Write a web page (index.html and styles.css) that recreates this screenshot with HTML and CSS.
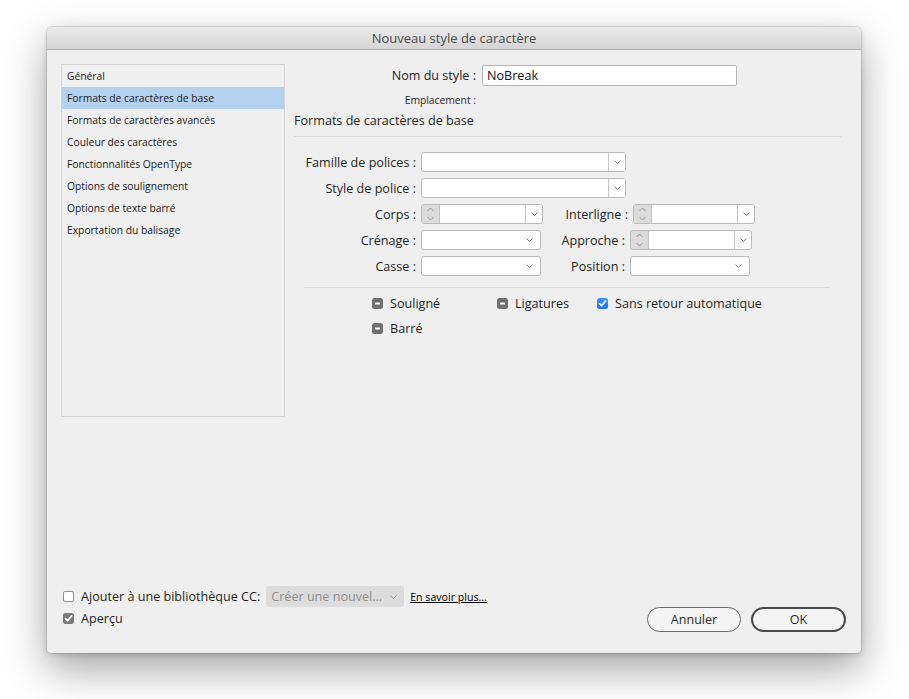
FILE: index.html
```html
<!DOCTYPE html>
<html lang="fr">
<head>
<meta charset="utf-8">
<title>Nouveau style de caractère</title>
<link rel="stylesheet" href="styles.css">
</head>
<body>
<div class="window">
  <div class="titlebar">Nouveau style de caractère</div>
  <div class="content">
    <div class="main">
      <ul class="sidebar">
        <li>Général</li>
        <li class="selected">Formats de caractères de base</li>
        <li>Formats de caractères avancés</li>
        <li>Couleur des caractères</li>
        <li>Fonctionnalités OpenType</li>
        <li>Options de soulignement</li>
        <li>Options de texte barré</li>
        <li>Exportation du balisage</li>
      </ul>
      <div class="panel">
        <div class="name-row">
          <span class="name-label">Nom du style :</span>
          <div class="textfield">NoBreak</div>
        </div>
        <div class="loc-row"><span class="loc-label">Emplacement :</span></div>
        <div class="section-title">Formats de caractères de base</div>
        <div class="rule"></div>
        <div class="form-grid">
          <span class="lbl">Famille de polices :</span>
          <div class="select segmented wide">
            <div class="field"></div>
            <div class="drop"><svg width="7" height="4" viewBox="0 0 7 4"><path d="M0.5 0.5 L3.5 3.5 L6.5 0.5" fill="none" stroke="#777" stroke-width="1"/></svg></div>
          </div>

          <span class="lbl">Style de police :</span>
          <div class="select segmented wide">
            <div class="field"></div>
            <div class="drop"><svg width="7" height="4" viewBox="0 0 7 4"><path d="M0.5 0.5 L3.5 3.5 L6.5 0.5" fill="none" stroke="#777" stroke-width="1"/></svg></div>
          </div>

          <span class="lbl">Corps :</span>
          <div class="combo">
            <div class="stepper"><svg width="17" height="18" viewBox="0 0 17 18"><path d="M5.5 6 L8.5 3 L11.5 6" fill="none" stroke="#939393" stroke-width="1"/><path d="M5.5 12 L8.5 15 L11.5 12" fill="none" stroke="#939393" stroke-width="1"/></svg></div>
            <div class="field"></div>
            <div class="drop"><svg width="7" height="4" viewBox="0 0 7 4"><path d="M0.5 0.5 L3.5 3.5 L6.5 0.5" fill="none" stroke="#777" stroke-width="1"/></svg></div>
          </div>
          <span class="lbl lbl2 near">Interligne :</span>
          <div class="combo shifted">
            <div class="stepper"><svg width="17" height="18" viewBox="0 0 17 18"><path d="M5.5 6 L8.5 3 L11.5 6" fill="none" stroke="#939393" stroke-width="1"/><path d="M5.5 12 L8.5 15 L11.5 12" fill="none" stroke="#939393" stroke-width="1"/></svg></div>
            <div class="field"></div>
            <div class="drop"><svg width="7" height="4" viewBox="0 0 7 4"><path d="M0.5 0.5 L3.5 3.5 L6.5 0.5" fill="none" stroke="#777" stroke-width="1"/></svg></div>
          </div>

          <span class="lbl">Crénage :</span>
          <div class="select plain"><svg width="7" height="4" viewBox="0 0 7 4"><path d="M0.5 0.5 L3.5 3.5 L6.5 0.5" fill="none" stroke="#777" stroke-width="1"/></svg></div>
          <span class="lbl lbl2">Approche :</span>
          <div class="combo">
            <div class="stepper"><svg width="17" height="18" viewBox="0 0 17 18"><path d="M5.5 6 L8.5 3 L11.5 6" fill="none" stroke="#939393" stroke-width="1"/><path d="M5.5 12 L8.5 15 L11.5 12" fill="none" stroke="#939393" stroke-width="1"/></svg></div>
            <div class="field"></div>
            <div class="drop"><svg width="7" height="4" viewBox="0 0 7 4"><path d="M0.5 0.5 L3.5 3.5 L6.5 0.5" fill="none" stroke="#777" stroke-width="1"/></svg></div>
          </div>

          <span class="lbl">Casse :</span>
          <div class="select plain"><svg width="7" height="4" viewBox="0 0 7 4"><path d="M0.5 0.5 L3.5 3.5 L6.5 0.5" fill="none" stroke="#777" stroke-width="1"/></svg></div>
          <span class="lbl lbl2">Position :</span>
          <div class="select plain"><svg width="7" height="4" viewBox="0 0 7 4"><path d="M0.5 0.5 L3.5 3.5 L6.5 0.5" fill="none" stroke="#777" stroke-width="1"/></svg></div>
        </div>
        <div class="rule inset"></div>
        <div class="checks">
          <div class="check"><span class="box mixed"><svg width="11" height="11" viewBox="0 0 11 11"><rect x="3" y="4.5" width="5" height="2" rx="0.5" fill="#fff"/></svg></span>Souligné</div>
          <div class="check"><span class="box mixed"><svg width="11" height="11" viewBox="0 0 11 11"><rect x="3" y="4.5" width="5" height="2" rx="0.5" fill="#fff"/></svg></span>Ligatures</div>
          <div class="check"><span class="box blue"><svg width="11" height="11" viewBox="0 0 11 11"><path d="M2.6 5.6 L4.6 7.8 L8.6 2.9" fill="none" stroke="#fff" stroke-width="1.6" stroke-linecap="round" stroke-linejoin="round"/></svg></span>Sans retour automatique</div>
          <div class="check"><span class="box mixed"><svg width="11" height="11" viewBox="0 0 11 11"><rect x="3" y="4.5" width="5" height="2" rx="0.5" fill="#fff"/></svg></span>Barré</div>
        </div>
      </div>
    </div>
    <div class="footer">
      <div class="footer-left">
        <div class="frow">
          <span class="box empty"></span>
          <span class="ftext">Ajouter à une bibliothèque CC:</span>
          <div class="disabled-select"><span>Créer une nouvel...</span><svg width="7" height="4" viewBox="0 0 7 4"><path d="M0.5 0.5 L3.5 3.5 L6.5 0.5" fill="none" stroke="#9b9b9b" stroke-width="1"/></svg></div>
          <span class="link">En savoir plus...</span>
        </div>
        <div class="frow second">
          <span class="box grey"><svg width="11" height="11" viewBox="0 0 11 11"><path d="M2.6 5.6 L4.6 7.8 L8.6 2.9" fill="none" stroke="#fff" stroke-width="1.6" stroke-linecap="round" stroke-linejoin="round"/></svg></span>
          <span class="ftext">Aperçu</span>
        </div>
      </div>
      <div class="buttons">
        <div class="btn">Annuler</div>
        <div class="btn default">OK</div>
      </div>
    </div>
  </div>
</div>
</body>
</html>
```

FILE: styles.css
```css
* { box-sizing: border-box; }

html, body {
  margin: 0;
  padding: 0;
  background: #ffffff;
}

body {
  font-family: "Open Sans", "DejaVu Sans", sans-serif;
  font-size: 12.6px;
  color: #1f1f1f;
  padding: 27px 0 0 47px;
  min-height: 699px;
}

.window {
  width: 814px;
  height: 626px;
  background: #efefef;
  border-radius: 5px 5px 4px 4px;
  box-shadow: 0 0 0 1px rgba(0, 0, 0, 0.10), 0 16px 40px rgba(0, 0, 0, 0.36), 0 2px 6px rgba(0, 0, 0, 0.14);
  display: flex;
  flex-direction: column;
  overflow: hidden;
}

.titlebar {
  height: 23px;
  line-height: 22px;
  text-align: center;
  color: #4a4a4a;
  font-size: 13px;
  background: linear-gradient(#ebebeb, #d5d5d5);
  border-bottom: 1px solid #afafaf;
  flex: none;
}

.content {
  flex: 1;
  display: flex;
  flex-direction: column;
}

.main {
  flex: 1;
  display: flex;
  align-items: flex-start;
}

/* sidebar */
.sidebar {
  list-style: none;
  margin: 14px 0 0 14px;
  padding: 0;
  width: 224px;
  height: 353px;
  border: 1px solid #d4d4d4;
  flex: none;
}

.sidebar li {
  height: 22px;
  line-height: 22px;
  padding-left: 5px;
  font-size: 10.3px;
  color: #1a1a1a;
  white-space: nowrap;
}

.sidebar li.selected {
  background: #b4d1f0;
}

/* right panel */
.panel {
  margin: 15px 0 0 9px;
  width: 547px;
  flex: none;
}

.name-row {
  display: flex;
  align-items: center;
  height: 21px;
}

.name-label {
  width: 182px;
  text-align: right;
  margin-right: 6px;
}

.textfield {
  width: 255px;
  height: 21px;
  line-height: 19px;
  border: 1px solid #b5b5b5;
  border-radius: 2px;
  background: #fff;
  padding-left: 4px;
  color: #111;
}

.loc-row {
  margin-top: 6px;
  height: 16px;
  line-height: 16px;
  width: 182px;
  text-align: right;
}

.loc-label {
  font-size: 10.3px;
}

.section-title {
  margin-top: 5px;
  height: 16px;
  line-height: 16px;
}

.rule {
  margin-top: 7px;
  height: 1px;
  background: #d8d8d8;
}

.rule.inset {
  margin: 11px 0 0 10px;
  width: 526px;
}

/* form grid */
.form-grid {
  margin-top: 15px;
  display: grid;
  grid-template-columns: 127px 122px 87px 125px;
  grid-auto-rows: 20px;
  row-gap: 6px;
  align-items: center;
}

.lbl {
  grid-column: 1;
  text-align: right;
  padding-right: 5px;
  line-height: 22px;
  height: 20px;
  white-space: nowrap;
}

.lbl.lbl2 {
  grid-column: 3;
}

.lbl.near {
  padding-right: 2px;
}

.select {
  height: 20px;
  border: 1px solid #bababa;
  border-radius: 3px;
  background: #fff;
  display: flex;
  align-items: center;
}

.select.wide {
  grid-column: 2 / span 3;
  width: 205px;
}

.select.plain {
  width: 120px;
  justify-content: flex-end;
  padding-right: 7px;
}

.select .field {
  flex: 1;
  height: 100%;
}

.drop {
  width: 17px;
  height: 100%;
  border-left: 1px solid #c6c6c6;
  display: flex;
  align-items: center;
  justify-content: center;
  background: #fff;
}

.combo {
  width: 122px;
  height: 20px;
  border: 1px solid #bababa;
  border-radius: 3px;
  overflow: hidden;
  display: flex;
}

.combo.shifted {
  margin-left: 3px;
}

.stepper {
  width: 18px;
  height: 100%;
  background: #dcdcdc;
  border-right: 1px solid #c4c4c4;
  display: flex;
  align-items: center;
  justify-content: center;
}

.combo .field {
  flex: 1;
  background: #fff;
}

/* checkboxes */
.checks {
  margin: 7px 0 0 78px;
  display: grid;
  grid-template-columns: 125px 100px auto;
  grid-auto-rows: 17px;
  row-gap: 8px;
}

.check {
  display: flex;
  align-items: center;
  gap: 7px;
  white-space: nowrap;
}

.box {
  width: 11px;
  height: 11px;
  border-radius: 2.5px;
  flex: none;
  display: block;
}

.box svg {
  display: block;
}

.box.mixed {
  background: #6f6f6f;
}

.box.blue {
  background: linear-gradient(#3c93f7, #1f74e8);
}

.box.grey {
  background: #7b7b7b;
}

.box.empty {
  background: #fff;
  border: 1px solid #8e8e8e;
  border-radius: 2px;
}

/* footer */
.footer {
  flex: none;
  display: flex;
  justify-content: space-between;
  align-items: flex-end;
  padding: 0 15px 21px 16px;
}

.footer-left {
  display: flex;
  flex-direction: column;
  margin-bottom: 3px;
}

.frow {
  display: flex;
  align-items: center;
  height: 21px;
}

.frow.second {
  height: 22px;
}

.ftext {
  margin-left: 7px;
  white-space: nowrap;
}

.disabled-select {
  margin-left: 6px;
  width: 138px;
  height: 21px;
  border-radius: 3px;
  background: #dcdcdc;
  color: #8d8d8d;
  display: flex;
  align-items: center;
  justify-content: space-between;
  padding: 0 7px 0 5px;
  white-space: nowrap;
}

.link {
  margin-left: 6px;
  font-size: 10.6px;
  color: #000;
  text-decoration: underline;
  white-space: nowrap;
}

.buttons {
  display: flex;
  gap: 10px;
}

.btn {
  width: 94px;
  height: 25px;
  border: 1px solid #6a6a6a;
  border-radius: 13px;
  background: #f4f4f4;
  display: flex;
  align-items: center;
  justify-content: center;
  color: #2a2a2a;
}

.btn.default {
  width: 95px;
  border: 2px solid #4a4a4a;
}
```
